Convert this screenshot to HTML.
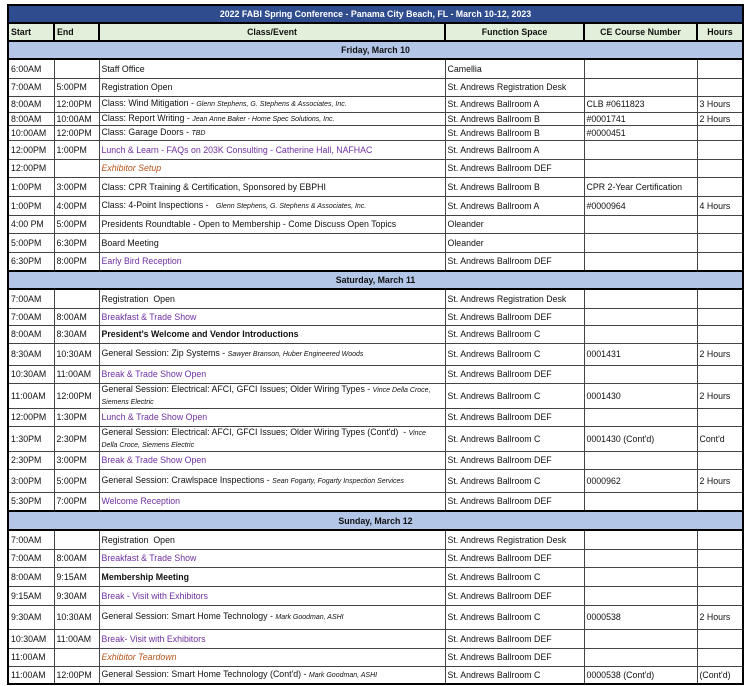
<!DOCTYPE html>
<html><head><meta charset="utf-8"><style>
body{margin:0;background:#fff;width:749px;height:686px;overflow:hidden}
table{position:absolute;left:7px;top:4px;border-collapse:collapse;table-layout:fixed;font-family:"Liberation Sans",sans-serif;font-size:8.8px;color:#111;border:2px solid #000}
td{border:1px solid #444;padding:0 2px;overflow:hidden;white-space:nowrap;line-height:10px}
td.w{white-space:normal}
.t td{background:#2F4D8E;color:#fff;font-weight:bold;text-align:center;border:2px solid #000}
.h td{background:#E2EFDA;font-weight:bold;border:2px solid #000}
.d td{background:#B4C6E7;font-weight:bold;text-align:center;border:2px solid #000}
.p{color:#7030A0}.o{color:#B8541A;font-style:italic}
i{font-size:7px}
b{font-weight:bold}
</style></head><body>
<table>
<colgroup><col style="width:46px"><col style="width:45px"><col style="width:346px"><col style="width:139px"><col style="width:113px"><col style="width:46px"></colgroup>
<tr class="t" style="height:18px"><td colspan="6">2022 FABI Spring Conference - Panama City Beach, FL - March 10-12, 2023</td></tr>
<tr class="h" style="height:18px"><td>Start</td><td>End</td><td style="text-align:center">Class/Event</td><td style="text-align:center">Function Space</td><td style="text-align:center">CE Course Number</td><td style="text-align:center">Hours</td></tr>
<tr class="d" style="height:18px"><td colspan="6">Friday, March 10</td></tr>
<tr style="height:19px"><td>6:00AM</td><td></td><td>Staff Office</td><td>Camellia</td><td></td><td></td></tr>
<tr style="height:18px"><td>7:00AM</td><td>5:00PM</td><td>Registration Open</td><td>St. Andrews Registration Desk</td><td></td><td></td></tr>
<tr style="height:16px"><td>8:00AM</td><td>12:00PM</td><td>Class: Wind Mitigation - <i>Glenn Stephens, G. Stephens &amp; Associates, Inc.</i></td><td>St. Andrews Ballroom A</td><td>CLB #0611823</td><td>3 Hours</td></tr>
<tr style="height:13px"><td>8:00AM</td><td>10:00AM</td><td>Class: Report Writing - <i>Jean Anne Baker - Home Spec Solutions, Inc.</i></td><td>St. Andrews Ballroom B</td><td>#0001741</td><td>2 Hours</td></tr>
<tr style="height:15px"><td>10:00AM</td><td>12:00PM</td><td>Class: Garage Doors - <i>TBD</i></td><td>St. Andrews Ballroom B</td><td>#0000451</td><td></td></tr>
<tr style="height:19px"><td>12:00PM</td><td>1:00PM</td><td class="p">Lunch &amp; Learn - FAQs on 203K Consulting - Catherine Hall, NAFHAC</td><td>St. Andrews Ballroom A</td><td></td><td></td></tr>
<tr style="height:18px"><td>12:00PM</td><td></td><td class="o">Exhibitor Setup</td><td>St. Andrews Ballroom DEF</td><td></td><td></td></tr>
<tr style="height:19px"><td>1:00PM</td><td>3:00PM</td><td>Class: CPR Training &amp; Certification, Sponsored by EBPHI</td><td>St. Andrews Ballroom B</td><td>CPR 2-Year Certification</td><td></td></tr>
<tr style="height:19px"><td>1:00PM</td><td>4:00PM</td><td>Class: 4-Point Inspections - &nbsp;&nbsp;<i>Glenn Stephens, G. Stephens &amp; Associates, Inc.</i></td><td>St. Andrews Ballroom A</td><td>#0000964</td><td>4 Hours</td></tr>
<tr style="height:18px"><td>4:00 PM</td><td>5:00PM</td><td>Presidents Roundtable - Open to Membership - Come Discuss Open Topics</td><td>Oleander</td><td></td><td></td></tr>
<tr style="height:19px"><td>5:00PM</td><td>6:30PM</td><td>Board Meeting</td><td>Oleander</td><td></td><td></td></tr>
<tr style="height:19px"><td>6:30PM</td><td>8:00PM</td><td class="p">Early Bird Reception</td><td>St. Andrews Ballroom DEF</td><td></td><td></td></tr>
<tr class="d" style="height:18px"><td colspan="6">Saturday, March 11</td></tr>
<tr style="height:19px"><td>7:00AM</td><td></td><td>Registration &nbsp;Open</td><td>St. Andrews Registration Desk</td><td></td><td></td></tr>
<tr style="height:17px"><td>7:00AM</td><td>8:00AM</td><td class="p">Breakfast &amp; Trade Show</td><td>St. Andrews Ballroom DEF</td><td></td><td></td></tr>
<tr style="height:18px"><td>8:00AM</td><td>8:30AM</td><td><b>President's Welcome and Vendor Introductions</b></td><td>St. Andrews Ballroom C</td><td></td><td></td></tr>
<tr style="height:22px"><td>8:30AM</td><td>10:30AM</td><td>General Session: Zip Systems - <i>Sawyer Branson, Huber Engineered Woods</i></td><td>St. Andrews Ballroom C</td><td>0001431</td><td>2 Hours</td></tr>
<tr style="height:18px"><td>10:30AM</td><td>11:00AM</td><td class="p">Break &amp; Trade Show Open</td><td>St. Andrews Ballroom DEF</td><td></td><td></td></tr>
<tr style="height:23px"><td>11:00AM</td><td>12:00PM</td><td class="w">General Session: Electrical: AFCI, GFCI Issues; Older Wiring Types - <i>Vince Della Croce, Siemens Electric</i></td><td>St. Andrews Ballroom C</td><td>0001430</td><td>2 Hours</td></tr>
<tr style="height:18px"><td>12:00PM</td><td>1:30PM</td><td class="p">Lunch &amp; Trade Show Open</td><td>St. Andrews Ballroom DEF</td><td></td><td></td></tr>
<tr style="height:24px"><td>1:30PM</td><td>2:30PM</td><td class="w">General Session: Electrical: AFCI, GFCI Issues; Older Wiring Types (Cont'd) &nbsp;- <i>Vince Della Croce, Siemens Electric</i></td><td>St. Andrews Ballroom C</td><td>0001430 (Cont'd)</td><td>Cont'd</td></tr>
<tr style="height:18px"><td>2:30PM</td><td>3:00PM</td><td class="p">Break &amp; Trade Show Open</td><td>St. Andrews Ballroom DEF</td><td></td><td></td></tr>
<tr style="height:23px"><td>3:00PM</td><td>5:00PM</td><td>General Session: Crawlspace Inspections - <i>Sean Fogarty, Fogarty Inspection Services</i></td><td>St. Andrews Ballroom C</td><td>0000962</td><td>2 Hours</td></tr>
<tr style="height:19px"><td>5:30PM</td><td>7:00PM</td><td class="p">Welcome Reception</td><td>St. Andrews Ballroom DEF</td><td></td><td></td></tr>
<tr class="d" style="height:19px"><td colspan="6">Sunday, March 12</td></tr>
<tr style="height:19px"><td>7:00AM</td><td></td><td>Registration &nbsp;Open</td><td>St. Andrews Registration Desk</td><td></td><td></td></tr>
<tr style="height:18px"><td>7:00AM</td><td>8:00AM</td><td class="p">Breakfast &amp; Trade Show</td><td>St. Andrews Ballroom DEF</td><td></td><td></td></tr>
<tr style="height:19px"><td>8:00AM</td><td>9:15AM</td><td><b>Membership Meeting</b></td><td>St. Andrews Ballroom C</td><td></td><td></td></tr>
<tr style="height:19px"><td>9:15AM</td><td>9:30AM</td><td class="p">Break - Visit with Exhibitors</td><td>St. Andrews Ballroom DEF</td><td></td><td></td></tr>
<tr style="height:24px"><td>9:30AM</td><td>10:30AM</td><td>General Session: Smart Home Technology - <i>Mark Goodman, ASHI</i></td><td>St. Andrews Ballroom C</td><td>0000538</td><td>2 Hours</td></tr>
<tr style="height:19px"><td>10:30AM</td><td>11:00AM</td><td class="p">Break- Visit with Exhibitors</td><td>St. Andrews Ballroom DEF</td><td></td><td></td></tr>
<tr style="height:18px"><td>11:00AM</td><td></td><td class="o">Exhibitor Teardown</td><td>St. Andrews Ballroom DEF</td><td></td><td></td></tr>
<tr style="height:18px"><td>11:00AM</td><td>12:00PM</td><td>General Session: Smart Home Technology (Cont'd) - <i>Mark Goodman, ASHI</i></td><td>St. Andrews Ballroom C</td><td>0000538 (Cont'd)</td><td>(Cont'd)</td></tr>
</table>
</body></html>
